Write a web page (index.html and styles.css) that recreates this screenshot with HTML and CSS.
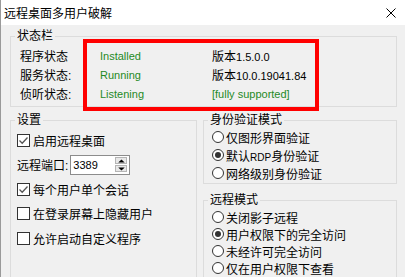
FILE: index.html
```html
<!DOCTYPE html>
<html lang="zh-CN">
<head>
<meta charset="utf-8">
<title>远程桌面多用户破解</title>
<link rel="stylesheet" href="styles.css">
</head>
<body>
<div class="window">
  <div class="titlebar">
    <span class="title">远程桌面多用户破解</span>
    <svg class="close" viewBox="0 0 10 10" width="10" height="10"><path d="M0.5 0.5 L9.5 9.5 M9.5 0.5 L0.5 9.5" stroke="#000" stroke-width="1" fill="none"/></svg>
  </div>
  <div class="content">
    <fieldset class="group status">
      <legend>状态栏</legend>
      <div class="status-grid">
        <span>程序状态</span><span class="ok">Installed</span><span>版本<span class="num">1.5.0.0</span></span>
        <span>服务状态:</span><span class="ok">Running</span><span>版本<span class="num">10.0.19041.84</span></span>
        <span>侦听状态:</span><span class="ok">Listening</span><span class="ok">[fully supported]</span>
      </div>
    </fieldset>
    <div class="columns">
      <fieldset class="group settings">
        <legend>设置</legend>
        <div class="settings-body">
          <div class="row"><span class="cb"><svg viewBox="0 0 11 11" width="11" height="11"><polyline points="1.5,5.5 4.2,8.2 9.5,2.5" fill="none" stroke="#555" stroke-width="1.3"/></svg></span><span>启用远程桌面</span></div>
          <div class="row port-row"><span>远程端口:</span>
            <div class="spin"><span class="spin-val">3389</span>
              <div class="spin-btns">
                <span class="sb"><svg viewBox="0 0 8 5" width="8" height="5"><polygon points="0,4.5 4,0.5 8,4.5" fill="#000"/></svg></span>
                <span class="sb"><svg viewBox="0 0 8 5" width="8" height="5"><polygon points="0,0.5 8,0.5 4,4.5" fill="#000"/></svg></span>
              </div>
            </div>
          </div>
          <div class="row"><span class="cb"><svg viewBox="0 0 11 11" width="11" height="11"><polyline points="1.5,5.5 4.2,8.2 9.5,2.5" fill="none" stroke="#555" stroke-width="1.3"/></svg></span><span>每个用户单个会话</span></div>
          <div class="row"><span class="cb"></span><span>在登录屏幕上隐藏用户</span></div>
          <div class="row"><span class="cb"></span><span>允许启动自定义程序</span></div>
        </div>
      </fieldset>
      <div class="right">
        <fieldset class="group auth">
          <legend>身份验证模式</legend>
          <div class="radio-list">
            <div class="rrow"><span class="rb"></span><span>仅图形界面验证</span></div>
            <div class="rrow"><span class="rb"><span class="dot"></span></span><span>默认<span class="latin">RDP</span>身份验证</span></div>
            <div class="rrow"><span class="rb"></span><span>网络级别身份验证</span></div>
          </div>
        </fieldset>
        <fieldset class="group mode">
          <legend>远程模式</legend>
          <div class="radio-list mode-list">
            <div class="rrow"><span class="rb"></span><span>关闭影子远程</span></div>
            <div class="rrow"><span class="rb"><span class="dot"></span></span><span>用户权限下的完全访问</span></div>
            <div class="rrow"><span class="rb"></span><span>未经许可完全访问</span></div>
            <div class="rrow"><span class="rb"></span><span>仅在用户权限下查看</span></div>
          </div>
        </fieldset>
      </div>
    </div>
  </div>
  <div class="highlight"></div>
</div>
</body>
</html>
```
FILE: styles.css
```css
* { box-sizing: border-box; }
html, body { margin: 0; padding: 0; }
body {
  width: 405px;
  height: 277px;
  overflow: hidden;
  background: #f0f0f0;
  font-family: "Liberation Sans", "Noto Sans CJK SC", sans-serif;
  font-size: 12px;
  color: #000;
}
.window {
  position: relative;
  width: 405px;
  height: 277px;
  border-left: 1px solid #9a9a9a;
  background: #f0f0f0;
  overflow: hidden;
}
.titlebar {
  height: 25px;
  background: #fff;
  display: flex;
  align-items: center;
  justify-content: space-between;
  padding: 1px 9px 0 3px;
}
.title { font-family: "Noto Sans CJK SC", sans-serif; font-size: 12px; line-height: 14px; }
.close { display: block; }
.content { padding: 4px 8px 0 9px; }
.group {
  margin: 0;
  padding: 0;
  border: 1px solid #dcdcdc;
  min-width: 0;
}
.group legend {
  margin-left: 4px;
  padding: 0 2px;
  line-height: 14px;
  font-size: 12px;
}
.status-grid {
  display: grid;
  grid-template-columns: 80px 112px auto;
  grid-auto-rows: 19px;
  align-items: center;
  padding: 3px 0 3px 9px;
}
.ok { color: #1f8a1f; font-size: 11px; }
.num { font-size: 11px; }
.columns { display: flex; gap: 6px; margin-top: 6px; align-items: flex-start; }
.settings { width: 187px; }
.settings-body {
  display: flex;
  flex-direction: column;
  gap: 2.5px;
  padding: 2px 0 60px 6px;
}
.row { height: 22px; display: flex; align-items: center; gap: 3px; }
.cb {
  width: 13px;
  height: 13px;
  border: 1px solid #333;
  background: #fff;
  display: flex;
  align-items: center;
  justify-content: center;
  flex: none;
}
.cb svg { display: block; }
.port-row { gap: 2px; }
.spin {
  width: 60px;
  height: 20px;
  border: 1px solid #8c8c8c;
  background: #fff;
  display: flex;
  align-items: center;
  justify-content: space-between;
  padding: 0 2px 0 2px;
}
.spin-val { font-size: 11px; }
.spin-btns { display: flex; flex-direction: column; gap: 1px; }
.sb {
  width: 12px;
  height: 7px;
  border: 1px solid #b5b5b5;
  background: #e8e8e8;
  display: flex;
  align-items: center;
  justify-content: center;
}
.sb svg { display: block; width: 7px; height: 4px; }
.right { width: 194px; display: flex; flex-direction: column; }
.radio-list { display: flex; flex-direction: column; padding: 1px 0 1px 8px; }
.rrow { height: 18px; display: flex; align-items: center; gap: 2px; }
.mode { margin-top: 9px; }
.mode-list { padding-top: 1.5px; padding-bottom: 20px; }
.mode-list .rrow { height: 17px; }
.rb {
  width: 12px;
  height: 12px;
  border: 1px solid #333;
  border-radius: 50%;
  background: #fff;
  display: flex;
  align-items: center;
  justify-content: center;
  flex: none;
}
.dot { width: 6px; height: 6px; border-radius: 50%; background: #333; }
.latin { font-size: 10px; }
.highlight {
  position: absolute;
  left: 82px;
  top: 39px;
  width: 236px;
  height: 72px;
  border: 4px solid #f00;
}
```
